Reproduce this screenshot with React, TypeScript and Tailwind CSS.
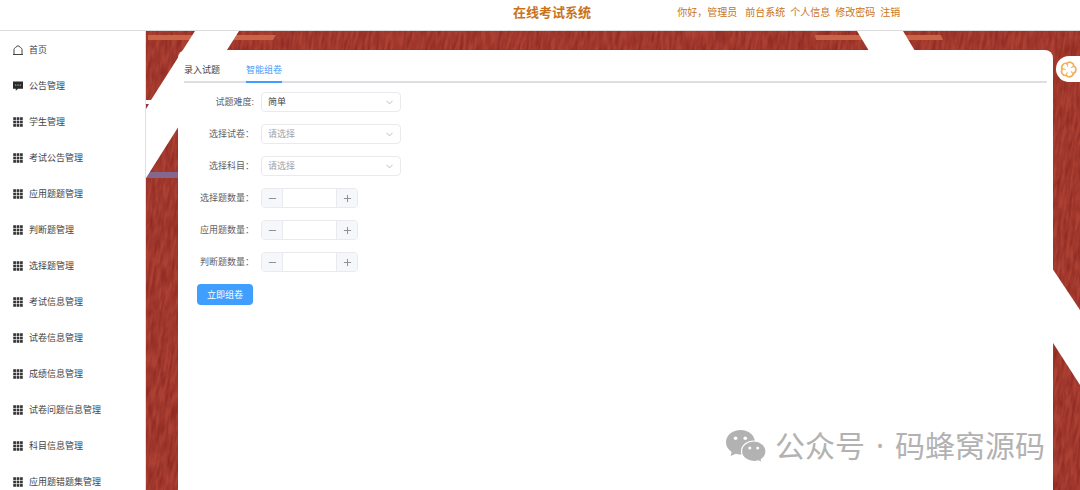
import { useState } from "react";
import type { ReactNode } from "react";
import { ChevronDown, Minus, Plus } from "lucide-react";

const fontStack = "font-['Noto_Sans','Noto_Sans_CJK_SC',sans-serif]";

function HomeIcon() {
  return (
    <svg viewBox="0 0 20 20" className="size-[10px] shrink-0" fill="none" stroke="#444" strokeWidth="2" aria-hidden="true">
      <path d="M0 19H20M2 19V9C2 7 3.500 6 5.500 4.500L10 1.200L14.500 4.500C16.500 6 18 7 18 9V19" />
    </svg>
  );
}

function ChatIcon() {
  return (
    <svg viewBox="0 0 20 20" className="size-[10px] shrink-0" aria-hidden="true">
      <path d="M0 1H20V15.500H10L5.500 19.500V15.500H0Z" fill="#2b2b2b" />
      <circle cx="5.500" cy="8" r="1.200" fill="#fff" />
      <circle cx="10" cy="8" r="1.200" fill="#fff" />
      <circle cx="14.500" cy="8" r="1.200" fill="#fff" />
    </svg>
  );
}

function GridIcon() {
  const cells = [0, 1, 2];
  return (
    <svg viewBox="0 0 20 20" className="size-[10px] shrink-0" fill="#333" aria-hidden="true">
      {cells.map((r) => cells.map((c) => <rect key={`${r}${c}`} x={0.5 + c * 6.8} y={0.5 + r * 6.8} width="5.4" height="5.4" />))}
    </svg>
  );
}

function WechatIcon() {
  return (
    <svg viewBox="0 0 40 33" className="h-[33px] w-10 shrink-0" aria-hidden="true">
      <path d="M14.500 0C6.500 0 0 5.400 0 12.300C0 16.300 2.200 19.700 5.700 22L4.600 26L9.800 23.700C11 24.200 12.700 24.500 14.500 24.500C22.500 24.500 29 19 29 12.300C29 5.400 22.500 0 14.500 0Z" fill="#b2b2b2" />
      <path d="M27.800 11C21 11 15.500 15.700 15.500 21.300C15.500 27 21 31.500 27.800 31.500C29.400 31.500 30.900 31.300 32.300 30.800L36.300 32.800L35.300 29.400C38.300 27.500 40 24.600 40 21.300C40 15.700 34.500 11 27.800 11Z" fill="#b2b2b2" stroke="#fff" strokeWidth="1.200" />
      <circle cx="9.600" cy="8.200" r="1.800" fill="#fff" />
      <circle cx="19.300" cy="8.200" r="1.800" fill="#fff" />
      <circle cx="23.800" cy="18" r="1.500" fill="#fff" />
      <circle cx="31.700" cy="18" r="1.500" fill="#fff" />
    </svg>
  );
}

function FlowerIcon() {
  return (
    <svg viewBox="-10 -10 20 20" className="size-[17px]" fill="none" stroke="#f3b05c" strokeLinecap="round" aria-hidden="true">
      {[20, 92, 164, 236, 308].map((a) => (
        <g key={a} transform={`rotate(${a})`}>
          <path d="M-4.300 -5.900C-3.200 -9.600 3.200 -9.800 4.300 -5.900" strokeWidth="2" />
          <path d="M4.300 -5.900C4.300 -4.600 3.600 -3.800 2.400 -3.300" strokeWidth="1.200" />
        </g>
      ))}
    </svg>
  );
}

function Backdrop() {
  return (
    <svg viewBox="0 0 934 459" preserveAspectRatio="none" className="absolute inset-0 h-full w-full" aria-hidden="true">
      <defs>
        <filter id="grain" x="0" y="0" width="100%" height="100%" colorInterpolationFilters="sRGB">
          <feTurbulence type="fractalNoise" baseFrequency="0.35 0.06" numOctaves="3" seed="4" />
          <feColorMatrix values="0 0 0 0 0.5  0 0 0 0 0.12  0 0 0 0 0.1  1.3 0 0 0 -0.4" />
        </filter>
      </defs>
      <rect width="934" height="459" fill="#ac4033" />
      <g transform="rotate(8 467 230)">
        <rect x="-60" y="-100" width="1054" height="660" filter="url(#grain)" />
      </g>
      <path d="M2 4H130L127 9H2Z" fill="#cb6444" />
      <path d="M669 4H795L797 9H670Z" fill="#cb6444" />
      <path d="M0 141H40V147H0Z" fill="#84678f" />
      <path d="M49 0H93L0 147V69H5Z" fill="#fff" />
      <path d="M0 73H3L0 78Z" fill="#8d3747" />
      <path d="M711 0H757L769 20H723Z" fill="#fff" />
      <path d="M900 228L934 279V354L900 301Z" fill="#fff" />
    </svg>
  );
}

const menu = [
  "首页",
  "公告管理",
  "学生管理",
  "考试公告管理",
  "应用题题管理",
  "判断题管理",
  "选择题管理",
  "考试信息管理",
  "试卷信息管理",
  "成绩信息管理",
  "试卷问题信息管理",
  "科目信息管理",
  "应用题错题集管理",
];

function Row({ id, label, children }: { id: string; label: string; children: ReactNode }) {
  return (
    <div className="flex h-5 items-center gap-[7px]">
      <label htmlFor={id} className="w-[70px] shrink-0 whitespace-nowrap text-right text-[#606266]">
        {label}
      </label>
      {children}
    </div>
  );
}

function Select({ id, placeholder, options }: { id: string; placeholder?: string; options: string[] }) {
  const [value, setValue] = useState(placeholder ? "" : options[0]);
  return (
    <div className="relative h-5 w-[140px]">
      <select
        id={id}
        value={value}
        onChange={(e) => setValue(e.target.value)}
        className={`h-full w-full appearance-none rounded-sm border border-[#e8eaee] bg-white pl-[6px] pr-5 outline-none ${value ? "text-[#444]" : "text-[#a0a3a9]"}`}
      >
        {placeholder && <option value="">{placeholder}</option>}
        {options.map((o) => (
          <option key={o}>{o}</option>
        ))}
      </select>
      <ChevronDown className="pointer-events-none absolute right-[6px] top-[5px] size-[11px] text-[#b4b8bf]" strokeWidth={2} />
    </div>
  );
}

function NumberField({ id }: { id: string }) {
  const [value, setValue] = useState("");
  const step = (d: number) => setValue(String(Math.max(0, Number(value) + d)));
  return (
    <div className="flex h-5 w-[97px] overflow-hidden rounded-sm border border-[#e8eaee]">
      <button type="button" aria-label="减少" onClick={() => step(-1)} className="flex w-[21px] shrink-0 items-center justify-center border-r border-[#e8eaee] bg-[#f5f7fa] text-[#888]">
        <Minus className="size-[11px]" strokeWidth={2} />
      </button>
      <input id={id} inputMode="numeric" value={value} onChange={(e) => setValue(e.target.value)} className="min-w-0 flex-1 bg-white text-center outline-none" />
      <button type="button" aria-label="增加" onClick={() => step(1)} className="flex w-[21px] shrink-0 items-center justify-center border-l border-[#e8eaee] bg-[#f5f7fa] text-[#888]">
        <Plus className="size-[11px]" strokeWidth={2} />
      </button>
    </div>
  );
}

export default function App() {
  return (
    <div className={`relative flex h-screen flex-col overflow-hidden bg-white text-[9px] leading-3 ${fontStack}`}>
      <header className="grid h-[31px] shrink-0 grid-cols-[47.5%_15.2%_1fr] border-b border-[#dcdcdc] pt-1 text-[#c8731a]">
        <h1 className="col-start-2 text-[13px] font-bold leading-4">在线考试系统</h1>
        <nav className="flex gap-[5px] whitespace-nowrap text-[10px] leading-4">
          <span className="mr-[3px]">你好，管理员</span>
          <a href="#front">前台系统</a>
          <a href="#profile">个人信息</a>
          <a href="#password">修改密码</a>
          <a href="#logout">注销</a>
        </nav>
      </header>
      <div className="flex min-h-0 flex-1">
        <aside className="w-[146px] shrink-0 overflow-hidden border-r border-[#e0e0e0]">
          <nav className="pt-px">
            {menu.map((name, i) => (
              <a key={name} href={`#menu-${i}`} className="flex h-9 items-center gap-[6px] pl-[13px] text-[#444]">
                {i === 0 ? <HomeIcon /> : i === 1 ? <ChatIcon /> : <GridIcon />}
                {name}
              </a>
            ))}
          </nav>
        </aside>
        <main className="relative flex min-w-0 flex-1 pl-8 pr-[27px] pt-[19px]">
          <Backdrop />
          <section className="relative min-w-0 flex-1 rounded-t-lg bg-white px-[6px] pt-[9px]">
            <div role="tablist" className="flex h-6 gap-[26px] border-b-2 border-[#dddfe3]">
              <button type="button" role="tab" aria-selected="false" className="flex h-6 items-center border-b-2 border-transparent text-[#444]">
                录入试题
              </button>
              <button type="button" role="tab" aria-selected="true" className="flex h-6 items-center border-b-2 border-[#409eff] text-[#409eff]">
                智能组卷
              </button>
            </div>
            <form className="flex flex-col items-start gap-3 pt-[9px]" onSubmit={(e) => e.preventDefault()}>
              <Row id="level" label="试题难度:">
                <Select id="level" options={["简单", "中等", "困难"]} />
              </Row>
              <Row id="paper" label="选择试卷：">
                <Select id="paper" placeholder="请选择" options={[]} />
              </Row>
              <Row id="subject" label="选择科目：">
                <Select id="subject" placeholder="请选择" options={[]} />
              </Row>
              <Row id="choice" label="选择题数量：">
                <NumberField id="choice" />
              </Row>
              <Row id="applied" label="应用题数量：">
                <NumberField id="applied" />
              </Row>
              <Row id="judge" label="判断题数量：">
                <NumberField id="judge" />
              </Row>
              <button type="submit" className="ml-[13px] h-[21px] rounded-sm bg-[#409eff] px-[10px] text-white">
                立即组卷
              </button>
            </form>
          </section>
          <button type="button" aria-label="助手" className="absolute right-0 top-[25px] flex h-[26px] w-6 items-center justify-center rounded-l-full bg-white">
            <FlowerIcon />
          </button>
        </main>
      </div>
      <div className="pointer-events-none absolute bottom-6 right-[35px] flex items-center gap-[9px] whitespace-nowrap text-[30px] leading-10 text-[#b2b2b2]">
        <WechatIcon />
        <span className="flex gap-2">
          <span>公众号</span>
          <span className="w-[14px] text-center">·</span>
          <span>码蜂窝源码</span>
        </span>
      </div>
    </div>
  );
}
